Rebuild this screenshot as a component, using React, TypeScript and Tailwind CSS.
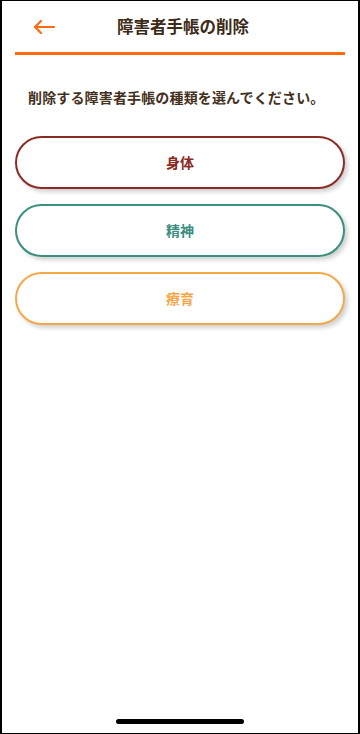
import React from "react";

const font = { fontFamily: '"Noto Sans CJK JP", "Noto Sans", sans-serif' };

function Btn({ label, border, text }: { label: string; border: string; text: string }) {
  return (
    <button
      className={`w-full h-[53px] rounded-full border-2 bg-white flex items-center justify-center text-[14px] font-bold shadow-[3px_3px_4px_rgba(0,0,0,0.18)] ${border} ${text}`}
    >
      {label}
    </button>
  );
}

export default function App() {
  return (
    <div className="w-[360px] h-[734px] bg-white border-x-2 border-y-[1.5px] border-black flex flex-col relative overflow-hidden" style={font}>
      <div className="h-[51px] flex items-center px-[30px] relative">
        <svg width="22" height="16" viewBox="0 0 22 16" className="absolute left-[31px] top-[18px]" fill="none" stroke="#ff6a13" strokeWidth="2.2" strokeLinecap="round" strokeLinejoin="round">
          <path d="M21 8H2" />
          <path d="M8 2L2 8l6 6" />
        </svg>
        <div className="flex-1 text-center text-[16.5px] font-bold text-[#3d2a17] pl-[6px]">障害者手帳の削除</div>
      </div>
      <div className="mx-[13px] h-[3px] bg-[#ff6a13]" />
      <div className="pt-[32px] pl-[26px] text-[14px] font-bold text-[#44301c] tracking-[0.15px]">削除する障害者手帳の種類を選んでください。</div>
      <div className="px-[13px] mt-[28px] flex flex-col gap-[15px]">
        <Btn label="身体" border="border-[#8a2b26]" text="text-[#8a2b26]" />
        <Btn label="精神" border="border-[#3a8f7f]" text="text-[#3a8f7f]" />
        <Btn label="療育" border="border-[#f5a84a]" text="text-[#f5a84a]" />
      </div>
      <div className="absolute bottom-[9px] left-1/2 -translate-x-1/2 w-[128px] h-[5px] rounded-full bg-black" />
    </div>
  );
}
